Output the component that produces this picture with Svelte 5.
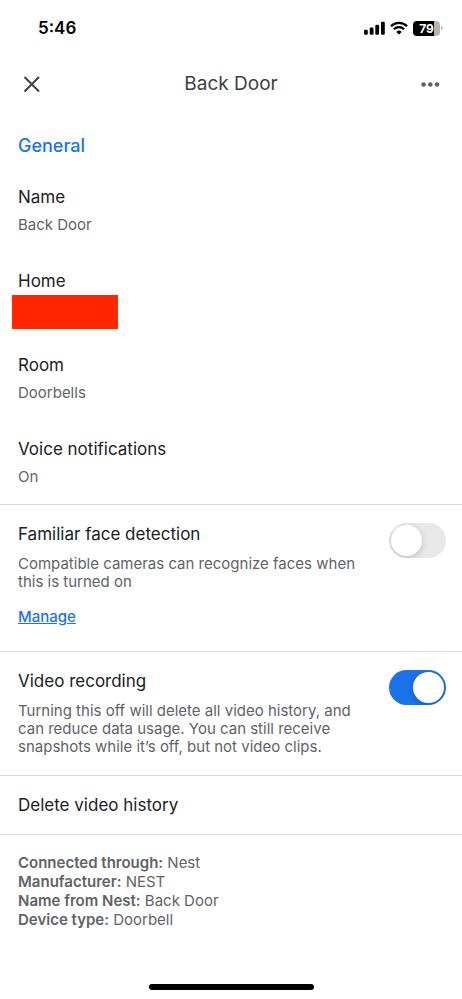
<!-- Device settings screen for a doorbell camera -->
<script>
  let faceDetection = $state(false);
  let videoRecording = $state(true);

  const general = [
    { label: "Name", value: "Back Door" },
    { label: "Home", value: "", hidden: true },
    { label: "Room", value: "Doorbells" },
    { label: "Voice notifications", value: "On" },
  ];

  const info = [
    { label: "Connected through", value: "Nest" },
    { label: "Manufacturer", value: "NEST" },
    { label: "Name from Nest", value: "Back Door" },
    { label: "Device type", value: "Doorbell" },
  ];
</script>

<div class="screen">
  <div class="status">
    <span class="time">5:46</span>
    <div class="indicators">
      <svg width="22" height="14" viewBox="0 0 22 14" aria-hidden="true">
        <rect x="0" y="8.8" width="3.8" height="5" rx="1.2" />
        <rect x="5.7" y="6.5" width="3.8" height="7.3" rx="1.2" />
        <rect x="11.3" y="3.7" width="3.8" height="10.1" rx="1.2" />
        <rect x="17" y="0.7" width="3.8" height="13.1" rx="1.2" />
      </svg>
      <svg width="18" height="14" viewBox="0 0 18 14" aria-hidden="true">
        <g fill="none" stroke="#000" stroke-width="2.3">
          <path d="M1 5.2a11.4 11.4 0 0 1 16 0" />
          <path d="M3.9 8.3a7.3 7.3 0 0 1 10.2 0" />
        </g>
        <path d="M9 13.6 6.3 10.9a3.9 3.9 0 0 1 5.4 0z" />
      </svg>
      <div class="battery">
        <span class="level">79</span>
        <svg width="3" height="6" viewBox="0 0 3 6" aria-hidden="true">
          <path d="M0 0.8a2.3 2.3 0 0 1 0 4.4z" fill="#b4b4b4" />
        </svg>
      </div>
    </div>
  </div>

  <header>
    <button type="button" aria-label="Close">
      <svg width="18" height="18" viewBox="0 0 18 18" aria-hidden="true">
        <path d="M1.5 2l14.5 14.5M16 2L1.5 16.5" fill="none" stroke="#3c4043" stroke-width="2" />
      </svg>
    </button>
    <h1>Back Door</h1>
    <button type="button" aria-label="More options">
      <svg width="20" height="6" viewBox="0 0 20 6" fill="#5f6368" aria-hidden="true">
        <circle cx="3.6" cy="3.5" r="2.3" />
        <circle cx="10.3" cy="3.5" r="2.3" />
        <circle cx="17" cy="3.5" r="2.3" />
      </svg>
    </button>
  </header>

  <main>
    <section class="general">
      <h2>General</h2>
      <dl>
        {#each general as item}
          <div class="item">
            <dt>{item.label}</dt>
            <dd>
              {item.value}
              {#if item.hidden}<span class="redacted"></span>{/if}
            </dd>
          </div>
        {/each}
      </dl>
    </section>

    <section class="setting faces">
      <div class="text">
        <label for="faces">Familiar face detection</label>
        <p>Compatible cameras can recognize faces when this is turned on</p>
        <a href="#manage">Manage</a>
      </div>
      <input id="faces" type="checkbox" role="switch" bind:checked={faceDetection} />
    </section>

    <section class="setting">
      <div class="text">
        <label for="recording">Video recording</label>
        <p>
          Turning this off will delete all video history, and can reduce data usage. You can still
          receive snapshots while it’s off, but not video clips.
        </p>
      </div>
      <input id="recording" type="checkbox" role="switch" bind:checked={videoRecording} />
    </section>

    <button type="button" class="delete">Delete video history</button>

    <section class="info">
      {#each info as row}
        <div><b>{row.label}:</b> {row.value}</div>
      {/each}
    </section>
  </main>

  <div class="home-bar"></div>
</div>

<style>
  :global(body) {
    margin: 0;
    background: #fff;
  }

  .screen {
    display: flex;
    flex-direction: column;
    box-sizing: border-box;
    min-height: 100vh;
    padding-bottom: 9px;
    font-family: Inter, "Liberation Sans", sans-serif;
    font-size: 15px;
    line-height: 18px;
    color: #5f6368;
  }

  .status {
    display: flex;
    align-items: center;
    justify-content: space-between;
    height: 56px;
    padding: 0 18px 0 38px;
  }

  .time {
    font-size: 17px;
    font-weight: 600;
    color: #000;
  }

  .indicators {
    display: flex;
    align-items: center;
    gap: 4px;
  }

  .battery {
    display: flex;
    align-items: center;
    gap: 1px;
    margin-left: 1px;
  }

  .level {
    width: 27px;
    height: 15px;
    border-radius: 4px;
    background: linear-gradient(to right, #000 79%, #b4b4b4 79%);
    color: #fff;
    font-size: 12px;
    font-weight: 700;
    line-height: 15px;
    text-align: center;
  }

  header {
    display: flex;
    align-items: center;
    justify-content: space-between;
    height: 56px;
    padding: 0 12px;
  }

  button {
    padding: 0;
    border: 0;
    background: none;
    font: inherit;
    cursor: pointer;
  }

  header button {
    display: flex;
    align-items: center;
    justify-content: center;
    width: 40px;
    height: 40px;
  }

  h1 {
    margin: 0;
    font-size: 19px;
    font-weight: 400;
    line-height: 24px;
    color: #3c4043;
  }

  .general {
    padding: 22px 18px 1px;
  }

  h2 {
    margin: 0 0 9px;
    font-size: 18px;
    font-weight: 500;
    line-height: 24px;
    color: #1a73e8;
  }

  dl,
  dd,
  p {
    margin: 0;
  }

  .item {
    padding: 18px 0 17px;
  }

  dt,
  label,
  .delete {
    display: block;
    font-size: 17px;
    line-height: 24px;
    color: #202124;
  }

  dd {
    position: relative;
    height: 18px;
    margin-top: 7px;
  }

  .redacted {
    position: absolute;
    top: -5px;
    left: -6px;
    width: 106px;
    height: 34px;
    background: #ff2600;
  }

  .setting {
    display: flex;
    justify-content: space-between;
    gap: 24px;
    padding: 17px 16px 19px 18px;
    border-top: 1px solid #dadce0;
  }

  .faces {
    padding-bottom: 25px;
  }

  .text {
    flex: 1;
  }

  .text p {
    margin-top: 9px;
  }

  .text a {
    display: inline-block;
    margin-top: 17px;
    font-weight: 500;
    color: #1a73e8;
  }

  input {
    appearance: none;
    flex: none;
    display: flex;
    align-items: center;
    box-sizing: border-box;
    width: 57px;
    height: 35px;
    margin: 1px 0 0;
    padding: 2px;
    border-radius: 18px;
    background: #e8e8e8;
    overflow: hidden;
    cursor: pointer;
  }

  input::before {
    content: "";
    width: 31px;
    height: 31px;
    border-radius: 50%;
    background: #fff;
    box-shadow: 0 2px 6px rgba(0, 0, 0, 0.18);
  }

  input:checked {
    justify-content: flex-end;
    background: #1a73e8;
  }

  .delete {
    width: 100%;
    padding: 17px 18px;
    border-top: 1px solid #dadce0;
    text-align: left;
  }

  .info {
    padding: 18px;
    border-top: 1px solid #dadce0;
    line-height: 19px;
  }

  .info b {
    font-weight: 600;
  }

  .home-bar {
    width: 165px;
    height: 6px;
    margin: auto auto 0;
    border-radius: 3px;
    background: #000;
  }
</style>
